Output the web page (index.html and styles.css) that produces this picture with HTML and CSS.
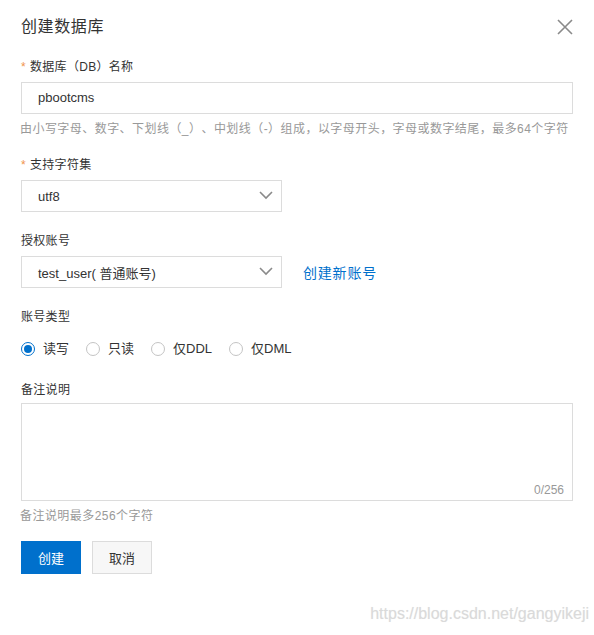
FILE: index.html
```html
<!DOCTYPE html>
<html lang="zh-CN">
<head>
    <meta charset="UTF-8">
    <meta name="viewport" content="width=device-width, initial-scale=1.0">
    <title>创建数据库</title>
    <link rel="stylesheet" href="styles.css">
</head>
<body>
    <div class="dialog">
        <div class="dialog-head">
            <h2 class="title">创建数据库</h2>
            <i class="close">
                <svg width="16" height="16" viewBox="0 0 16 16">
                    <path d="M1 1 L15 15 M15 1 L1 15" stroke="#8a8a8a" stroke-width="1.6" fill="none"/>
                </svg>
            </i>
        </div>

        <div class="form-item">
            <label class="label"><span class="req">*</span>数据库（DB）名称</label>
            <div class="input">pbootcms</div>
            <p class="help">由小写字母、数字、下划线（_）、中划线（-）组成，以字母开头，字母或数字结尾，最多64个字符</p>
        </div>

        <div class="form-item charset">
            <label class="label"><span class="req">*</span>支持字符集</label>
            <div class="select">
                <span>utf8</span>
                <svg class="arrow" width="14" height="9" viewBox="0 0 14 9">
                    <path d="M1 1 L7 7 L13 1" stroke="#8a8a8a" stroke-width="1.6" fill="none"/>
                </svg>
            </div>
        </div>

        <div class="form-item">
            <label class="label">授权账号</label>
            <div class="row">
                <div class="select">
                    <span>test_user( 普通账号)</span>
                    <svg class="arrow" width="14" height="9" viewBox="0 0 14 9">
                        <path d="M1 1 L7 7 L13 1" stroke="#8a8a8a" stroke-width="1.6" fill="none"/>
                    </svg>
                </div>
                <a class="link">创建新账号</a>
            </div>
        </div>

        <div class="form-item">
            <label class="label">账号类型</label>
            <div class="radio-group">
                <span class="radio checked"><i class="dot"></i>读写</span>
                <span class="radio"><i class="dot"></i>只读</span>
                <span class="radio"><i class="dot"></i>仅DDL</span>
                <span class="radio"><i class="dot"></i>仅DML</span>
            </div>
        </div>

        <div class="form-item remark">
            <label class="label">备注说明</label>
            <div class="textarea">
                <span class="count">0/256</span>
            </div>
            <p class="help">备注说明最多256个字符</p>
        </div>

        <div class="buttons">
            <button class="btn primary">创建</button>
            <button class="btn">取消</button>
        </div>
    </div>
    <div class="watermark">https://blog.csdn.net/gangyikeji</div>
</body>
</html>
```

FILE: styles.css
```css
body {
    margin: 0;
    background: #FFF;
    font-family: "Liberation Sans", "Noto Sans CJK SC", sans-serif;
    color: #333;
    font-size: 12px;
    text-spacing-trim: space-all;
}

.dialog {
    padding: 16px 21px 0 21px;
}

.dialog-head {
    display: flex;
    justify-content: space-between;
    align-items: center;
    height: 22px;
}

.title {
    margin: 0;
    font-size: 16px;
    font-weight: 400;
    line-height: 22px;
    letter-spacing: 0.6px;
    color: #333;
}

.close {
    display: flex;
    width: 16px;
    height: 16px;
}

.form-item {
    margin-top: 20px;
}

.form-item.charset {
    margin-top: 18px;
}

.form-item.remark {
    margin-top: 23px;
}

.label {
    display: block;
    line-height: 18px;
    margin-bottom: 6px;
    letter-spacing: 0.3px;
    color: #333;
}

.remark .label {
    margin-bottom: 4px;
}

.req {
    color: #f0944d;
    margin-right: 4px;
}

.input {
    height: 30px;
    border: 1px solid #dcdcdc;
    padding: 0 16px;
    line-height: 30px;
    font-size: 13px;
    color: #333;
}

.help {
    margin: 6px -10px 0 -1px;
    line-height: 18px;
    letter-spacing: 0.45px;
    white-space: nowrap;
    color: #999;
}

.row {
    display: flex;
    align-items: center;
}

.select {
    width: 227px;
    height: 30px;
    border: 1px solid #dcdcdc;
    padding: 0 16px;
    display: flex;
    align-items: center;
    justify-content: space-between;
    font-size: 13px;
    color: #333;
}

.select .arrow {
    margin-right: -8px;
    margin-top: -2px;
}

.link {
    margin-left: 21px;
    font-size: 14px;
    letter-spacing: 0.8px;
    color: #0070cc;
    cursor: pointer;
}

.radio-group {
    display: flex;
    padding-top: 8px;
    line-height: 18px;
    font-size: 13px;
}

.radio {
    display: flex;
    align-items: center;
    margin-right: 17px;
}

.radio .dot {
    width: 12px;
    height: 12px;
    border: 1px solid #c4c4c4;
    border-radius: 50%;
    margin-right: 8px;
    display: flex;
    align-items: center;
    justify-content: center;
}

.radio.checked .dot {
    border-color: #0070cc;
}

.radio.checked .dot::after {
    content: "";
    width: 8px;
    height: 8px;
    border-radius: 50%;
    background: #0070cc;
}

.textarea {
    position: relative;
    height: 96px;
    border: 1px solid #dcdcdc;
}

.textarea .count {
    position: absolute;
    right: 8px;
    bottom: 3px;
    color: #999;
    font-size: 12px;
}

.buttons {
    display: flex;
    margin-top: 16px;
}

.btn {
    width: 60px;
    height: 33px;
    border: 1px solid #dcdcdc;
    background: #f7f7f7;
    color: #333;
    font-size: 13px;
    font-family: inherit;
    margin-right: 11px;
    cursor: pointer;
}

.btn.primary {
    background: #0070cc;
    border-color: #0070cc;
    color: #FFF;
}

.watermark {
    position: absolute;
    right: 5px;
    top: 605px;
    font-size: 16px;
    color: #dadada;
    text-shadow: 0 0 1px #eee;
}
```
